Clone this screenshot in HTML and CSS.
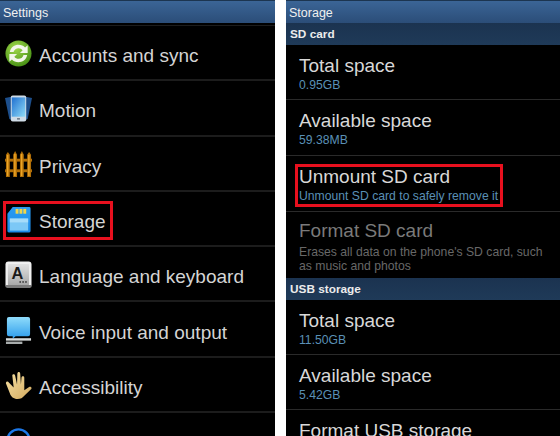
FILE: index.html
```html
<!DOCTYPE html>
<html lang="en">
<head>
    <meta charset="UTF-8">
    <title>Settings and Storage</title>
    <link rel="stylesheet" href="styles.css">
</head>
<body>
    <div class="screens">
        <div class="phone">
            <div class="title-bar">Settings</div>
            <div class="title-gap"></div>
            <div class="menu-row">
                <svg class="icon" viewBox="0 0 28 28">
                    <defs>
                        <radialGradient id="syncGreen" cx="0.4" cy="0.3" r="0.8">
                            <stop offset="0" stop-color="#9fd84a"/>
                            <stop offset="1" stop-color="#3f8a10"/>
                        </radialGradient>
                    </defs>
                    <circle cx="14" cy="14" r="13.500" fill="url(#syncGreen)"/>
                    <path d="M5 12.500C6 7.500 10 5 14 5c2.800 0 5.200 1 6.800 2.900L23.500 5.500V13.500h-8l2.800-2.800C17.200 9.300 15.800 8.500 14 8.500c-2.400 0-4.300 1.300-5.200 4z" fill="#f2f6ea"/>
                    <path d="M23 15.500C22 20.500 18 23 14 23c-2.800 0-5.200-1-6.800-2.900L4.500 22.500V14.500h8l-2.800 2.800c1.100 1.400 2.500 2.200 4.300 2.200 2.400 0 4.300-1.300 5.200-4z" fill="#f2f6ea"/>
                </svg>
                <span class="menu-text">Accounts and sync</span>
            </div>
            <div class="menu-row">
                <svg class="icon" viewBox="0 0 28 28">
                    <defs>
                        <linearGradient id="screenBlue" x1="0" y1="0" x2="1" y2="1">
                            <stop offset="0" stop-color="#1f6fd0"/>
                            <stop offset="1" stop-color="#8fdcf8"/>
                        </linearGradient>
                    </defs>
                    <path d="M0 3l8-1.500 1 25-4.500-1.500z" fill="#1d4f8c"/>
                    <path d="M28 3l-8-1.500-1 25 4.500-1.500z" fill="#1d4f8c"/>
                    <rect x="6" y="0.500" width="16" height="27" rx="2" fill="#cfdbe6"/>
                    <rect x="7" y="2.500" width="14" height="20" fill="url(#screenBlue)"/>
                    <rect x="12.500" y="24" width="3" height="1.500" fill="#66727e"/>
                </svg>
                <span class="menu-text">Motion</span>
            </div>
            <div class="menu-row">
                <svg class="icon" viewBox="0 0 28 28">
                    <g fill="#b06e08">
                        <path d="M1 4l2-3 2 3v23H1z"/>
                        <path d="M8.500 4l2-4 2 4v23h-4z"/>
                        <path d="M15.500 4l2-4 2 4v23h-4z"/>
                        <path d="M23 4l2-3 2 3v23h-4z"/>
                        <rect x="0" y="8" width="28" height="3"/>
                        <rect x="0" y="19" width="28" height="3"/>
                    </g>
                    <g fill="#eca526">
                        <rect x="2" y="4" width="1.500" height="22"/>
                        <rect x="9.500" y="3" width="1.500" height="23"/>
                        <rect x="16.500" y="3" width="1.500" height="23"/>
                        <rect x="24" y="4" width="1.500" height="22"/>
                    </g>
                </svg>
                <span class="menu-text">Privacy</span>
            </div>
            <div class="menu-row is-marked">
                <svg class="icon" viewBox="0 0 28 28">
                    <defs>
                        <linearGradient id="cardBlue" x1="0" y1="0" x2="0" y2="1">
                            <stop offset="0" stop-color="#2a9cf2"/>
                            <stop offset="1" stop-color="#1b8ae8"/>
                        </linearGradient>
                    </defs>
                    <path d="M8 1h17a1.500 1.500 0 0 1 1.500 1.500V26a1.500 1.500 0 0 1-1.500 1.500H4A1.500 1.500 0 0 1 2.500 26V8z" fill="url(#cardBlue)"/>
                    <rect x="5" y="13" width="19" height="12.500" fill="#7cc8f6"/>
                    <rect x="5" y="13" width="19" height="4" fill="#a6dcfa"/>
                    <g fill="#f2d64a">
                        <rect x="11" y="3" width="3" height="5"/>
                        <rect x="15" y="3" width="3" height="5"/>
                        <rect x="19" y="3" width="3" height="5"/>
                    </g>
                </svg>
                <span class="menu-text">Storage</span>
            </div>
            <div class="menu-row">
                <svg class="icon" viewBox="0 0 28 28">
                    <defs>
                        <linearGradient id="keyFace" x1="0" y1="0" x2="0" y2="1">
                            <stop offset="0" stop-color="#e2e2e2"/>
                            <stop offset="1" stop-color="#a8a8a8"/>
                        </linearGradient>
                    </defs>
                    <rect x="0.500" y="0.500" width="27" height="27" rx="3" fill="#f0f0f0"/>
                    <rect x="3" y="3" width="22" height="22" rx="1" fill="url(#keyFace)"/>
                    <rect x="0.500" y="25" width="27" height="2.500" rx="1" fill="#7c7c7c"/>
                    <text class="key-letter" x="13" y="19" text-anchor="middle">A</text>
                    <g fill="#222222">
                        <rect x="15" y="21" width="1.500" height="1.500"/>
                        <rect x="18" y="21" width="1.500" height="1.500"/>
                        <rect x="21" y="21" width="1.500" height="1.500"/>
                    </g>
                </svg>
                <span class="menu-text">Language and keyboard</span>
            </div>
            <div class="menu-row">
                <svg class="icon" viewBox="0 0 28 28">
                    <defs>
                        <linearGradient id="bubbleBlue" x1="0" y1="0" x2="0" y2="1">
                            <stop offset="0" stop-color="#8fdcfb"/>
                            <stop offset="1" stop-color="#2d9ceb"/>
                        </linearGradient>
                    </defs>
                    <path d="M4 0h20a2 2 0 0 1 2 2v16a2 2 0 0 1-2 2H11l-3 2.500V20H4a2 2 0 0 1-2-2V2a2 2 0 0 1 2-2z" fill="url(#bubbleBlue)"/>
                    <rect x="1" y="22" width="26" height="2.500" fill="#d8dcdc"/>
                    <rect x="1" y="25.500" width="17" height="2.500" fill="#a8acac"/>
                </svg>
                <span class="menu-text">Voice input and output</span>
            </div>
            <div class="menu-row">
                <svg class="icon" viewBox="0 0 28 28">
                    <defs>
                        <linearGradient id="handSkin" x1="0" y1="0" x2="1" y2="1">
                            <stop offset="0" stop-color="#f8e2a4"/>
                            <stop offset="1" stop-color="#d2a95e"/>
                        </linearGradient>
                    </defs>
                    <path d="M4 11c-1-2-3.500-1-3 1L5 22c1 3.500 4 6 8 6 3 0 5.500-1.500 7-3.500l7-6.500c1.500-2-.5-3.500-2-2.500L20 19V6c0-2-2.700-2-2.900 0L16.500 13 15.800 2c0-2.500-3-2.500-3 0L12.500 13 10.500 3.500c-.5-2-3.200-1.500-2.900.5L9 16z" fill="url(#handSkin)"/>
                </svg>
                <span class="menu-text">Accessibility</span>
            </div>
            <div class="menu-row">
                <svg class="icon" viewBox="0 0 28 28">
                    <circle cx="14" cy="14" r="11.500" fill="none" stroke="#1c78e8" stroke-width="2.500"/>
                </svg>
                <span class="menu-text">Date and time</span>
            </div>
        </div>

        <div class="phone">
            <div class="title-bar">Storage</div>
            <div class="section-bar">SD card</div>
            <div class="info-row">
                <div class="info-title">Total space</div>
                <div class="info-value">0.95GB</div>
            </div>
            <div class="info-row">
                <div class="info-title">Available space</div>
                <div class="info-value">59.38MB</div>
            </div>
            <div class="info-row is-marked">
                <div class="info-title">Unmount SD card</div>
                <div class="info-value">Unmount SD card to safely remove it</div>
            </div>
            <div class="info-row is-disabled">
                <div class="info-title">Format SD card</div>
                <div class="info-value">Erases all data on the phone's SD card, such as music and photos</div>
            </div>
            <div class="section-bar">USB storage</div>
            <div class="info-row">
                <div class="info-title">Total space</div>
                <div class="info-value">11.50GB</div>
            </div>
            <div class="info-row">
                <div class="info-title">Available space</div>
                <div class="info-value">5.42GB</div>
            </div>
            <div class="info-row">
                <div class="info-title">Format USB storage</div>
            </div>
        </div>
    </div>
</body>
</html>
```

FILE: styles.css
```css
* {
    box-sizing: border-box;
}

body {
    margin: 0;
    background-color: #ffffff;
    font-family: "Liberation Sans", Arial, sans-serif;
}

.screens {
    display: flex;
    justify-content: space-between;
    width: 560px;
    height: 436px;
    overflow: hidden;
}

.phone {
    width: 275px;
    height: 436px;
    overflow: hidden;
    background-color: #000000;
    color: #d8d8d8;
}

.phone + .phone {
    width: 274px;
}

.title-bar {
    height: 23px;
    padding: 0 0 0 3px;
    border-top: 1px solid #1c3550;
    background: linear-gradient(#3b6596, #2b4d78);
    color: #f0f0f0;
    font-size: 12.500px;
    line-height: 24px;
}

.title-gap {
    height: 3px;
    border-bottom: 1px solid #1c1c1c;
}

.section-bar {
    height: 22px;
    padding-left: 4px;
    background: linear-gradient(#1b3350, #1f3a58);
    color: #ececec;
    font-size: 11.800px;
    font-weight: bold;
    line-height: 22px;
}

.menu-row {
    display: flex;
    align-items: center;
    gap: 7px;
    height: 55.3px;
    padding: 2px 0 0 5px;
    border-bottom: 2px solid #1c1c1c;
    position: relative;
}

.menu-text {
    padding-top: 5px;
    font-size: 19px;
    color: #d4d4d4;
}

.icon {
    flex: none;
    width: 27px;
    height: 27px;
}

.key-letter {
    fill: #1a1a1a;
    font-size: 17px;
    font-weight: bold;
}

.info-row {
    height: 55.3px;
    padding: 9px 0 0 13px;
    border-bottom: 1px solid #2a2a2a;
    position: relative;
}

.info-row.is-marked {
    height: 56px;
}

.info-row.is-disabled {
    height: 66px;
    padding-top: 7px;
    border-bottom: 0;
}

.info-title {
    font-size: 19px;
    line-height: 24px;
}

.info-value {
    padding-right: 8px;
    color: #5a90b6;
    font-size: 12.200px;
    line-height: 14px;
}

.is-disabled .info-title {
    color: #7a7a7a;
}

.is-disabled .info-value {
    margin-top: 2px;
    color: #686868;
}

/* red marker boxes from the annotated screenshot */
.is-marked::after {
    content: "";
    box-sizing: border-box;
    position: absolute;
    border: 3px solid #e8101e;
    pointer-events: none;
}

.menu-row.is-marked::after {
    left: 3px;
    top: 9px;
    width: 110px;
    height: 39px;
}

.info-row.is-marked::after {
    left: 9px;
    top: 8px;
    width: 208px;
    height: 43px;
}
```
